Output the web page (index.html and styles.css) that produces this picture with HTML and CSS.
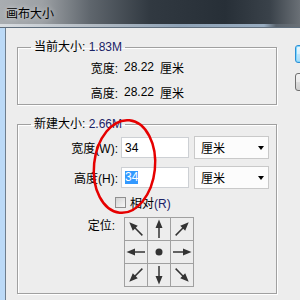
FILE: index.html
```html
<!DOCTYPE html>
<html>
<head>
<meta charset="utf-8">
<link rel="stylesheet" href="styles.css">
</head>
<body>
<div class="window">
  <div class="titlebar"><span class="title">画布大小</span></div>
  <div class="glow"></div>
  <div class="sep"></div>
  <div class="frame">
    <div class="edge"></div>
    <div class="client">
      <div class="main">
        <fieldset class="group g1">
          <legend>当前大小: <span class="num">1.83M</span></legend>
          <div class="body">
            <div class="row"><span class="label">宽度:</span><span class="val">28.22</span><span class="unit">厘米</span></div>
            <div class="row"><span class="label">高度:</span><span class="val">28.22</span><span class="unit">厘米</span></div>
          </div>
        </fieldset>
        <fieldset class="group g2">
          <legend>新建大小: <span class="num">2.66M</span></legend>
          <div class="body">
            <div class="frow">
              <span class="label">宽度(W):</span>
              <div class="input">34</div>
              <div class="select"><span>厘米</span><i class="caret"></i></div>
            </div>
            <div class="frow">
              <span class="label">高度(H):</span>
              <div class="input"><span class="sel">34</span></div>
              <div class="select"><span>厘米</span><i class="caret"></i></div>
            </div>
            <div class="check"><span class="box"></span><span>相对<span class="num">(R)</span></span></div>
            <div class="anchor">
              <span class="label">定位:</span>
              <div class="grid">
                <div class="cell"><svg viewBox="0 0 22 22"><g transform="rotate(-45 11 11)"><line x1="11" y1="20" x2="11" y2="9" class="ln"/><polygon points="11,1.5 7.5,10 14.5,10" class="hd"/></g></svg></div>
                <div class="cell"><svg viewBox="0 0 22 22"><g><line x1="11" y1="20" x2="11" y2="9" class="ln"/><polygon points="11,1.5 7.5,10 14.5,10" class="hd"/></g></svg></div>
                <div class="cell"><svg viewBox="0 0 22 22"><g transform="rotate(45 11 11)"><line x1="11" y1="20" x2="11" y2="9" class="ln"/><polygon points="11,1.5 7.5,10 14.5,10" class="hd"/></g></svg></div>
                <div class="cell"><svg viewBox="0 0 22 22"><g transform="rotate(-90 11 11)"><line x1="11" y1="20" x2="11" y2="9" class="ln"/><polygon points="11,1.5 7.5,10 14.5,10" class="hd"/></g></svg></div>
                <div class="cell"><svg viewBox="0 0 22 22"><circle cx="11" cy="11" r="3.5" class="hd"/></svg></div>
                <div class="cell"><svg viewBox="0 0 22 22"><g transform="rotate(90 11 11)"><line x1="11" y1="20" x2="11" y2="9" class="ln"/><polygon points="11,1.5 7.5,10 14.5,10" class="hd"/></g></svg></div>
                <div class="cell"><svg viewBox="0 0 22 22"><g transform="rotate(-135 11 11)"><line x1="11" y1="20" x2="11" y2="9" class="ln"/><polygon points="11,1.5 7.5,10 14.5,10" class="hd"/></g></svg></div>
                <div class="cell"><svg viewBox="0 0 22 22"><g transform="rotate(180 11 11)"><line x1="11" y1="20" x2="11" y2="9" class="ln"/><polygon points="11,1.5 7.5,10 14.5,10" class="hd"/></g></svg></div>
                <div class="cell"><svg viewBox="0 0 22 22"><g transform="rotate(135 11 11)"><line x1="11" y1="20" x2="11" y2="9" class="ln"/><polygon points="11,1.5 7.5,10 14.5,10" class="hd"/></g></svg></div>
              </div>
            </div>
          </div>
        </fieldset>
      </div>
      <div class="buttons">
        <div class="btn ok"></div>
        <div class="btn"></div>
      </div>
    </div>
  </div>
  <svg class="mark" viewBox="0 0 300 300"><ellipse cx="124.5" cy="166.5" rx="30.5" ry="46.5" transform="rotate(6 124.5 166.5)" fill="none" stroke="#e60000" stroke-width="2.5"/></svg>
</div>
</body>
</html>
```
FILE: styles.css
```css
body {
  margin: 0;
  width: 300px;
  height: 300px;
  overflow: hidden;
  background: #ededed;
  font-family: "Liberation Sans", "Noto Sans CJK SC", sans-serif;
  font-size: 12px;
  color: #000;
}
.window {
  position: relative;
  width: 300px;
  height: 300px;
  display: flex;
  flex-direction: column;
}
.titlebar {
  height: 24px;
  flex: none;
  display: flex;
  align-items: center;
  padding-left: 6px;
  background: linear-gradient(to right, #a9adb1 0%, #9da1a5 14%, #5f666d 30%, #313941 50%, #272f37 75%, #3a424a 90%, #6a7076 100%);
}
.title {
  font-size: 12px;
  color: #000;
  text-shadow: 0 0 5px rgba(255,255,255,0.7);
}
.glow {
  height: 3px;
  flex: none;
  background: linear-gradient(to right, #d9dde1 0%, #b4bcc4 30%, #8ea2b6 60%, #98acc0 88%, #5a646e 92%, #6a7076 100%);
}
.sep {
  height: 1px;
  flex: none;
  background: #5f6e7d;
}
.frame {
  flex: 1;
  display: flex;
  min-height: 0;
}
.edge {
  width: 5px;
  flex: none;
  background: #bcdaf7;
  border-right: 1px solid #6e7e8e;
}
.client {
  flex: 1;
  display: flex;
  padding: 11px 0 0 11px;
  overflow: hidden;
  background: #ededed;
}
.main {
  flex: none;
  width: 260px;
}
.group {
  box-sizing: border-box;
  width: 260px;
  margin: 0;
  padding: 0;
  min-inline-size: 0;
  border: 1px solid #a0a0a0;
  box-shadow: inset 1px 1px 0 #fff, 1px 1px 0 #fff;
}
legend {
  margin-left: 13px;
  padding: 0 3px;
  line-height: 16px;
  height: 16px;
}
.num {
  color: #1b2366;
}
.g1 .body {
  padding: 2px 0 2px;
  display: flex;
  flex-direction: column;
  gap: 5px;
}
.row {
  display: flex;
  align-items: center;
  height: 20px;
}
.label {
  flex: none;
  width: 100px;
  text-align: right;
}
.val {
  margin-left: 6px;
}
.unit {
  margin-left: 6px;
}
.g2 {
  margin-top: 11px;
}
.g2 .body {
  padding: 4px 0 6px;
  display: flex;
  flex-direction: column;
}
.frow {
  display: flex;
  align-items: center;
  height: 23px;
}
.frow + .frow {
  margin-top: 7px;
}
.input {
  margin-left: 3px;
  width: 68px;
  height: 21px;
  box-sizing: border-box;
  border: 1px solid #cdd0d4;
  background: #fff;
  padding-left: 3px;
  display: flex;
  align-items: center;
}
.sel {
  background: #3399ff;
  color: #fff;
  line-height: 13px;
}
.select {
  margin-left: 5px;
  width: 75px;
  height: 23px;
  box-sizing: border-box;
  border: 1px solid #c9c9c9;
  background: #fcfcfc;
  display: flex;
  align-items: center;
  justify-content: space-between;
  padding: 0 4px 0 6px;
}
.caret {
  width: 0;
  height: 0;
  border-left: 3.5px solid transparent;
  border-right: 3.5px solid transparent;
  border-top: 4px solid #000;
}
.check {
  margin-top: 5px;
  height: 16px;
  display: flex;
  align-items: center;
  padding-left: 97px;
}
.box {
  width: 11px;
  height: 11px;
  box-sizing: border-box;
  border: 1px solid #8f8f8f;
  background: linear-gradient(135deg, #d3d3d3, #f6f6f6);
  margin-right: 4px;
}
.anchor {
  margin-top: 7px;
  display: flex;
  align-items: flex-start;
}
.anchor .label {
  width: 97px;
  padding-top: 1px;
  line-height: 16px;
}
.grid {
  margin-left: 9px;
  display: grid;
  grid-template-columns: repeat(3, 22px);
  grid-template-rows: repeat(3, 22px);
  gap: 1px;
  padding: 1px;
  background: #a0a0a0;
}
.cell {
  background: #ededed;
  display: flex;
}
.cell svg {
  width: 22px;
  height: 22px;
  display: block;
}
.ln {
  stroke: #333;
  stroke-width: 1.5;
}
.hd {
  fill: #333;
}
.buttons {
  flex: none;
  margin-left: 18px;
  margin-top: 6px;
  display: flex;
  flex-direction: column;
  gap: 10px;
}
.btn {
  width: 80px;
  height: 18px;
  box-sizing: border-box;
  border: 1px solid #707070;
  border-radius: 3px;
  background: linear-gradient(#f2f2f2, #ebebeb 50%, #dddddd 50%, #cfcfcf);
}
.btn.ok {
  border-color: #2c8fd6;
  box-shadow: inset 0 0 0 1px #7fd6fb;
  background: linear-gradient(#eaf6fd, #d9f0fc 50%, #bee6fd 50%, #a7d9f5);
}
.mark {
  position: absolute;
  left: 0;
  top: 0;
  width: 300px;
  height: 300px;
  pointer-events: none;
}
```
